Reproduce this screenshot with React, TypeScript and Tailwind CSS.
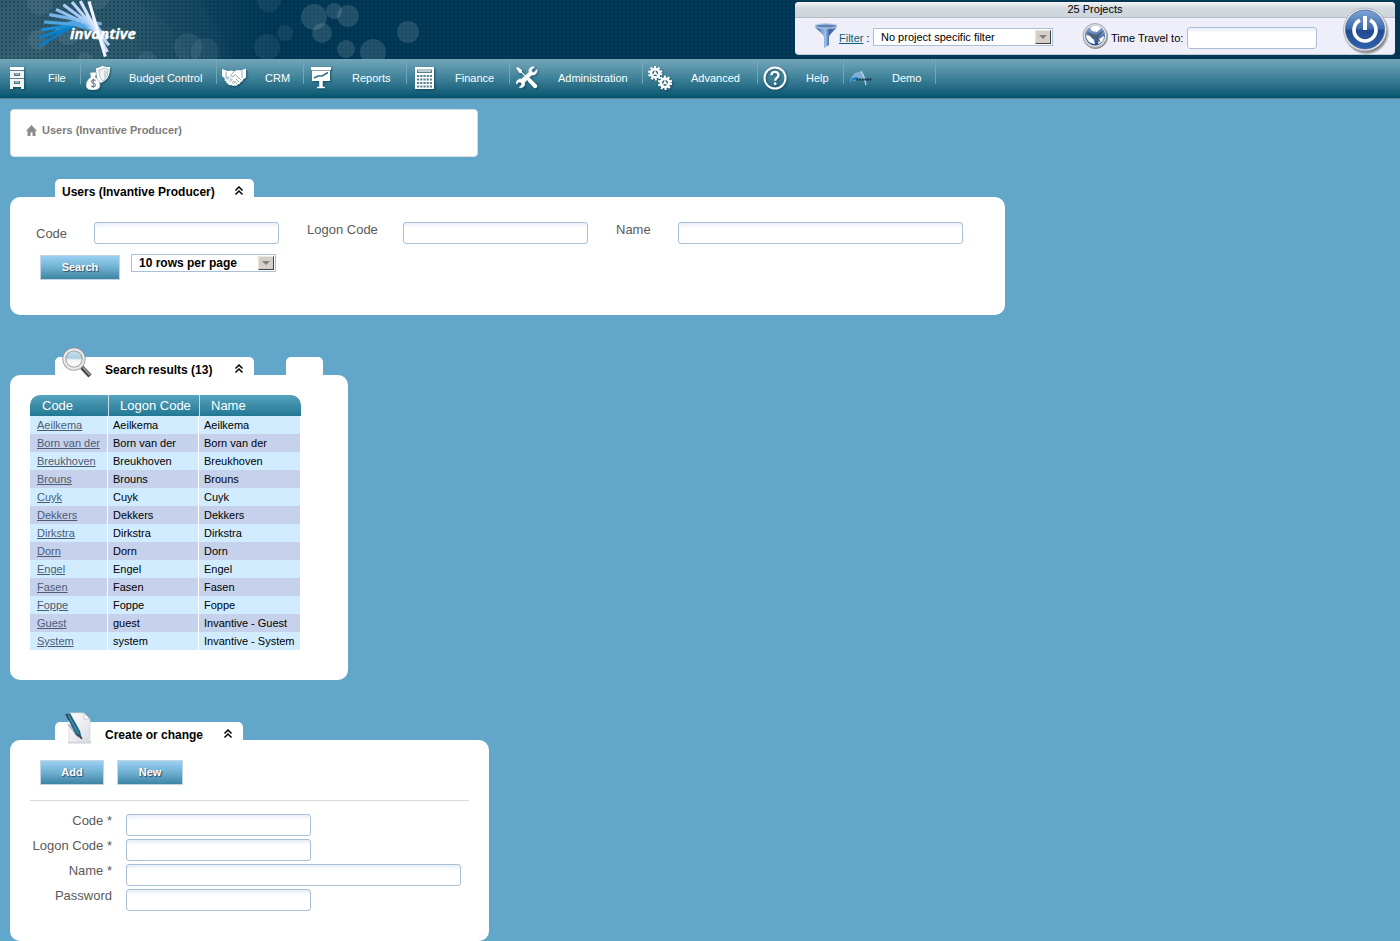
import { useState } from "react";
import type { ReactNode } from "react";

const CIRCLES: [number, number, number][] = [
  [40, 2, 13], [38, 40, 10], [98, -2, 11], [68, 33, 12], [147, 60, 9], [85, 60, 8],
  [188, 47, 14], [205, 52, 14], [269, 0, 12], [285, 33, 8], [267, 47, 13], [314, 17, 13],
  [322, 33, 10], [334, 11, 8], [348, 16, 11], [346, 49, 9], [373, 52, 13], [408, 32, 11],
];

const RAYS: [number, number, number, number, string][] = [
  [117, 138, 220, 78, "#0a7cc6"],
  [117, 113, 228, 76, "#0a80cc"],
  [124, 90, 245, 71, "#1c8cd6"],
  [132, 66, 272, 76, "#4fa6e2"],
  [148, 44, 305, 72, "#76b4ea"],
  [168, 28, 302, 92, "#93c0f0"],
  [190, 14, 326, 114, "#a8caf5"],
  [216, 6, 327, 136, "#bcd4f8"],
  [241, 3, 322, 156, "#d4e2fb"],
  [267, 4, 316, 170, "#f0f4ff"],
];

function Rays() {
  return (
    <>
      <path d="M150 100L205 66L245 48L285 62L318 108L222 78z" fill="#4fa0dc" />
      <path d="M225 62L262 45L290 70L318 110L280 92z" fill="#b4cff6" />
      {RAYS.map(([x1, y1, x2, y2, c]) => (
        <line key={`${x1}-${y1}`} x1={x1} y1={y1} x2={x2} y2={y2} stroke={c} strokeWidth="9.500" />
      ))}
    </>
  );
}

function Logo() {
  return (
    <svg width="110" height="59" viewBox="0 0 110 59" role="img" aria-label="invantive">
      <g transform="translate(-32 0) scale(0.3333)">
        <Rays />
      </g>
      <text x="38" y="39" fill="#fff" fontFamily="Open Sans, sans-serif" fontSize="15" fontWeight="700" fontStyle="italic" stroke="#fff" strokeWidth="0.300">
        invantive
      </text>
    </svg>
  );
}

function HeaderBackdrop() {
  return (
    <svg className="absolute left-0 top-0" width="430" height="59" aria-hidden="true">
      <g fill="#fff">
        <circle cx="75" cy="110" r="165" opacity="0.02" />
        <circle cx="75" cy="110" r="125" opacity="0.02" />
        <circle cx="75" cy="110" r="90" opacity="0.02" />
        {CIRCLES.map(([cx, cy, r]) => (
          <circle key={`${cx}-${cy}`} cx={cx} cy={cy} r={r} opacity={cx > 300 ? 0.13 : 0.07} />
        ))}
      </g>
    </svg>
  );
}

const iconClass = "drop-shadow-[1px_1px_1px_rgba(0,50,70,0.6)]";

function CabinetIcon() {
  return (
    <svg width="24" height="24" viewBox="0 0 24 24" className={iconClass}>
      <path d="M5 1h14v3H5z" fill="#fff" />
      <path d="M5 5h14v7H5zM5 13h14v8H5zM5 21h3v2H5zM16 21h3v2h-3z" fill="#f2f4f6" />
      <path d="M6 4.500h12M5 12.500h14" stroke="#5f7f8c" />
      <rect x="9" y="7" width="6" height="3" fill="#4d7787" />
      <rect x="9" y="15" width="6" height="3" fill="#4d7787" />
      <path d="M10 8h4M10 16h4" stroke="#dfe6ea" />
    </svg>
  );
}

function MoneyIcon() {
  return (
    <svg width="24" height="24" viewBox="0 0 24 24" className={iconClass}>
      <path d="M10 2c4 0 5-2 7-2 2 1 4 1 7 1 0 8-2 13-9 16-4-2-5-7-5-15z" fill="#fff" />
      <path d="M13 4c2 0 3-1 5-2 1 1 3 1 4 1 0 5-1 9-5 12-3-3-4-6-4-11z" fill="#f0f2f3" stroke="#9bb0b8" strokeWidth="0.800" />
      <path d="M18 4c1 1 2 1 3 1 0 4-1 6-3 8z" fill="#cdd7db" />
      <path d="M4 7c1-1 3 0 4-1l3 1-2 4c4 2 5 5 5 8 0 4-3 5-7 5s-7-1-7-5c0-3 2-6 5-8z" fill="#fafafa" stroke="#9bb0b8" strokeWidth="0.600" />
      <path d="M9.500 14.500c-1-1-4-1-4 1s4 1.500 4 3.500-3 2-4.500 1M7.300 12.500v9.500" fill="none" stroke="#6d838c" strokeWidth="1.100" />
    </svg>
  );
}

function HandshakeIcon() {
  return (
    <svg width="24" height="24" viewBox="0 0 24 24" className={iconClass}>
      <path
        d="M0 3l6 2 4-.500 2 1 3-1.500 4 .500 5-2v9l-3 2c0 1.500-1 2.500-2.500 2.500 0 1.500-1.200 2.300-2.700 2.200-.600 1.500-2 2-3.300 1.300l-1.500.500-1.500-1c-1.500.800-3 .200-3.200-1.200-1.500 0-2.300-1-2-2.300-1.500-.300-2-1.500-1.500-2.800L0 10z"
        fill="#fff"
      />
      <path
        d="M12 5.800L8.500 9.500c.500 1.500 2.500 1.200 3.500.200l1.500-1 6 5.800M4 5.500v7M20 5v7M4 12.500l2-1.700 1 .700-2 2.300M7 14.500l2-2 1 1-2 2.500M10 17l1.700-1.700.8 1-1 1.700M14 13l3.500 3.500M12.500 15l2.500 3"
        fill="none"
        stroke="#7c979f"
        strokeWidth="0.800"
      />
    </svg>
  );
}

function BoardIcon() {
  return (
    <svg width="24" height="24" viewBox="0 0 24 24" className={iconClass}>
      <path d="M2 1h20v3H2zM3 4h18v11H3z" fill="#fff" />
      <path d="M3 4.500h18" stroke="#8aa5b0" />
      <path d="M5 12l4-2 4 0 6-3.500" fill="none" stroke="#326f85" strokeWidth="1.600" />
      <path d="M11 15h2v6h-2zM8 21.500h8" fill="#fff" stroke="#fff" strokeWidth="1.500" />
    </svg>
  );
}

function CalculatorIcon() {
  return (
    <svg width="24" height="24" viewBox="0 0 24 24" className={iconClass}>
      <path d="M3 1h19v22H3z" fill="#fff" />
      <path d="M5 3.500h15v3.500H5z" fill="#55828f" />
      <path d="M6 5h13" stroke="#dfe9ec" strokeWidth="1.500" />
      <g fill="#55828f">
        {[9, 12.5, 16, 19.5].map((y) =>
          [5, 8.2, 11.4, 14.6, 17.8].map((x) => <rect key={`${x}-${y}`} x={x} y={y} width="2.200" height="2" />),
        )}
      </g>
    </svg>
  );
}

function ToolsIcon() {
  return (
    <svg width="24" height="24" viewBox="0 0 24 24" className={iconClass}>
      <path d="M1 2l2-1 4 3v2l6 6 2 0 7 7c1 2-1 4-3 3l-6.500-7v-2l-6-6H4.500z" fill="#fff" />
      <path
        d="M22 3.500l-3 3-2-.600-.500-2 3-3c-3-.800-6.500 1.500-5.500 5.400L6.600 13c-3-.700-6 1.800-5.100 5.200l2.500-2.300 2.200.600.600 2.200-2.600 2.800c3.600 1 6.300-1.800 5.500-5.100L16.700 9c3.500.800 6-2.300 5.300-5.500z"
        fill="#fff"
        stroke="#fff"
        strokeWidth="0.500"
      />
    </svg>
  );
}

function Gear({ cx, cy }: { cx: number; cy: number }) {
  return (
    <g transform={`translate(${cx} ${cy})`}>
      <circle r="6" fill="none" stroke="#fff" strokeWidth="2.400" strokeDasharray="2.100 1.670" />
      <circle r="4.200" fill="none" stroke="#fff" strokeWidth="2.600" />
      <circle r="1.500" fill="#e6eef1" />
      <path d="M0 0v-4M0 0l3.500 2.500M0 0l-3.500 2.500" stroke="#fff" strokeWidth="1.200" />
    </g>
  );
}

function GearsIcon() {
  return (
    <svg width="24" height="24" viewBox="0 0 24 24" className={iconClass}>
      <Gear cx={7.2} cy={7.2} />
      <Gear cx={17} cy={16.8} />
    </svg>
  );
}

function HelpIcon() {
  return (
    <svg width="24" height="24" viewBox="0 0 24 24" className={iconClass}>
      <circle cx="12" cy="12" r="10.500" fill="none" stroke="#fff" strokeWidth="2" />
      <path d="M8.500 9.300c.200-4.600 7.300-4.400 7 .100-.200 2.400-3.300 2.600-3.300 5.300" fill="none" stroke="#fff" strokeWidth="2.300" />
      <circle cx="12.200" cy="17.700" r="1.400" fill="#fff" />
    </svg>
  );
}

function DemoIcon() {
  return (
    <svg width="24" height="24" viewBox="0 0 24 24">
      <path d="M1 16C2 9 7 5 13 6l4 8 0 4-2-4H8z" fill="#8db9e2" opacity="0.800" />
      <path d="M1 17l2-5 5-1 2 3H5z" fill="#1583cc" />
      <path d="M12 5l3 6 2 8" stroke="#c5d9ee" strokeWidth="1.200" fill="none" />
      <path d="M7.500 13.500H23" stroke="#16343f" strokeWidth="1.800" strokeDasharray="2 0.600" />
    </svg>
  );
}

const MENU: { label: string; width: string; icon: ReactNode }[] = [
  { label: "File", width: "w-[80px]", icon: <CabinetIcon /> },
  { label: "Budget Control", width: "w-[135px]", icon: <MoneyIcon /> },
  { label: "CRM", width: "w-[86px]", icon: <HandshakeIcon /> },
  { label: "Reports", width: "w-[102px]", icon: <BoardIcon /> },
  { label: "Finance", width: "w-[102px]", icon: <CalculatorIcon /> },
  { label: "Administration", width: "w-[132px]", icon: <ToolsIcon /> },
  { label: "Advanced", width: "w-[114px]", icon: <GearsIcon /> },
  { label: "Help", width: "w-[85px]", icon: <HelpIcon /> },
  { label: "Demo", width: "w-[91px]", icon: <DemoIcon /> },
];

const USERS: [string, string, string][] = [
  ["Aeilkema", "Aeilkema", "Aeilkema"],
  ["Born van der", "Born van der", "Born van der"],
  ["Breukhoven", "Breukhoven", "Breukhoven"],
  ["Brouns", "Brouns", "Brouns"],
  ["Cuyk", "Cuyk", "Cuyk"],
  ["Dekkers", "Dekkers", "Dekkers"],
  ["Dirkstra", "Dirkstra", "Dirkstra"],
  ["Dorn", "Dorn", "Dorn"],
  ["Engel", "Engel", "Engel"],
  ["Fasen", "Fasen", "Fasen"],
  ["Foppe", "Foppe", "Foppe"],
  ["Guest", "guest", "Invantive - Guest"],
  ["System", "system", "Invantive - System"],
];

function TextInput({ id, width, type = "text" }: { id: string; width: string; type?: string }) {
  return (
    <input
      id={id}
      type={type}
      className={`h-[22px] rounded-[3px] border border-[#a9c0d6] bg-white bg-linear-to-b from-[#e6edf6] to-white to-25% px-1 text-[11px] text-black outline-none ${width}`}
    />
  );
}

function Select({ id, label, option, className }: { id: string; label: string; option: string; className: string }) {
  return (
    <span className="relative inline-flex">
      <select
        id={id}
        aria-label={label}
        className={`h-[18px] appearance-none border border-[#a9c0d6] bg-white pl-[7px] pr-5 leading-4 text-black outline-none ${className}`}
      >
        <option>{option}</option>
      </select>
      <span className="pointer-events-none absolute right-[2px] top-[2px] flex h-[14px] w-4 items-center justify-center border border-b-[#404040] border-l-[#e8e6e0] border-r-[#404040] border-t-[#e8e6e0] bg-[#d4d0c8]">
        <svg width="8" height="4" viewBox="0 0 8 4" aria-hidden="true">
          <path d="M0 0h8L4 4z" fill="#808080" />
        </svg>
      </span>
    </span>
  );
}

function ActionButton({ width, children }: { width: string; children: ReactNode }) {
  return (
    <button
      type="button"
      className={`h-[25px] border border-[#c3d6e4] bg-linear-to-b from-[#9ad0f3] via-[#6fb0d0] to-[#3d84a4] text-[11px] font-bold text-white [text-shadow:1px_1px_1px_#2d4a6a] ${width}`}
    >
      {children}
    </button>
  );
}

function Panel({
  title,
  icon,
  extraTab,
  tabClass,
  bodyClass,
  children,
}: {
  title: string;
  icon?: ReactNode;
  extraTab?: boolean;
  tabClass: string;
  bodyClass: string;
  children: ReactNode;
}) {
  const [open, setOpen] = useState(true);
  return (
    <section>
      <div className="ml-[45px] flex gap-8">
        <div className={`relative flex h-[18px] items-end justify-between rounded-t-[5px] bg-white pr-[10px] ${tabClass}`}>
          {icon}
          <h2 className="whitespace-nowrap text-[12px] font-bold leading-[10px] text-black">{title}</h2>
          <button type="button" aria-label={`Toggle ${title}`} onClick={() => setOpen(!open)} className="h-3">
            <svg width="10" height="10" viewBox="0 0 10 10" fill="none" stroke="#000" strokeWidth="1.500">
              <path d="M1.500 4.500L5 1l3.500 3.500M1.500 8.500L5 5l3.500 3.500" />
            </svg>
          </button>
        </div>
        {extraTab && <div className="h-[18px] w-[37px] rounded-t-[5px] bg-white" />}
      </div>
      <div className={`w-fit rounded-[10px] bg-white ${bodyClass}`}>{open && children}</div>
    </section>
  );
}

function MagnifierIcon() {
  return (
    <svg className="absolute -top-[10px] left-[7px]" width="31" height="32" viewBox="0 0 31 32" aria-hidden="true">
      <defs>
        <linearGradient id="lens" x1="0" y1="0" x2="0" y2="1">
          <stop offset="0" stopColor="#cfe6f2" />
          <stop offset="0.450" stopColor="#a9cfe2" />
          <stop offset="0.550" stopColor="#f1f4f5" />
          <stop offset="1" stopColor="#fff" />
        </linearGradient>
      </defs>
      <path d="M18.500 19l4 3.500" stroke="#b5b5b5" strokeWidth="3" />
      <path d="M20 20.500l8 8.500" stroke="#4a4a4a" strokeWidth="4.500" />
      <path d="M21 20.500l7 7.500" stroke="#a5a5a5" strokeWidth="1.400" />
      <circle cx="12" cy="12" r="9.700" fill="url(#lens)" stroke="#8c8c8c" strokeWidth="3.800" />
      <circle cx="12" cy="12" r="9.700" fill="none" stroke="#e9e9e9" strokeWidth="2.200" />
    </svg>
  );
}

function EditPageIcon() {
  return (
    <svg className="absolute -top-[10px] left-[9px]" width="30" height="32" viewBox="0 0 30 32" aria-hidden="true">
      <defs>
        <linearGradient id="sheet" x1="0" y1="0" x2="1" y2="1">
          <stop offset="0" stopColor="#fff" />
          <stop offset="1" stopColor="#d9dce3" />
        </linearGradient>
      </defs>
      <path d="M4 30.500h23" stroke="#cfcfd4" strokeWidth="2" />
      <path d="M5 1h15l6 6v23H5z" fill="url(#sheet)" stroke="#d5d8de" strokeWidth="0.800" />
      <path d="M20 1v6h6z" fill="#fff" stroke="#b9bcc4" strokeWidth="0.800" />
      <path d="M3 12l4 1 9 13-3-1z" fill="#a6abb3" opacity="0.800" />
      <path d="M3 2l3-1 10 18 2 8-6-4L4 7z" fill="#1f6687" />
      <path d="M4 3l12 21" stroke="#5ba2c0" strokeWidth="1" />
      <path d="M2 2l3 6M14 22l4 5" stroke="#3a3f46" strokeWidth="1.600" />
    </svg>
  );
}

function FilterIcon() {
  return (
    <svg width="24" height="26" viewBox="0 0 24 26" aria-hidden="true">
      <defs>
        <linearGradient id="funnel" x1="0" y1="0" x2="1" y2="0">
          <stop offset="0" stopColor="#2f5ea8" />
          <stop offset="0.480" stopColor="#9dbfe6" />
          <stop offset="0.650" stopColor="#3c62a4" />
          <stop offset="1" stopColor="#5d86c2" />
        </linearGradient>
      </defs>
      <path d="M1 3h22c0 3-8 8-8 11v8l-5 3V14C10 11 1 6 1 3z" fill="url(#funnel)" />
      <ellipse cx="12" cy="3" rx="11" ry="2.200" fill="#5c80b8" stroke="#b3cbe8" strokeWidth="1.200" />
    </svg>
  );
}

function GlobeIcon() {
  return (
    <svg width="28" height="28" viewBox="0 0 28 28" aria-hidden="true">
      <defs>
        <linearGradient id="globe" x1="0" y1="0" x2="0" y2="1">
          <stop offset="0" stopColor="#8fb0dc" />
          <stop offset="1" stopColor="#24488c" />
        </linearGradient>
      </defs>
      <circle cx="14.500" cy="14.500" r="12.500" fill="#8f9197" />
      <circle cx="14" cy="13.500" r="12" fill="#dcdde1" stroke="#9a9ca2" strokeWidth="0.800" />
      <circle cx="14" cy="13.500" r="10" fill="url(#globe)" />
      <path d="M9 6c3-3 8-3 11 0l-4 4-5-1zM5 13l4 1 4 4 1 4c-5 0-9-4-9-9zM18 17l5-3c0 4-2 7-6 8z" fill="#fff" />
      <path d="M6 10l9 3 8-5-6 7 3 6-6-5-2 1z" fill="#4a6076" />
    </svg>
  );
}

function PowerIcon() {
  return (
    <svg width="50" height="50" viewBox="0 0 50 50" className="block" aria-hidden="true">
      <defs>
        <linearGradient id="power" x1="0" y1="0" x2="0" y2="1">
          <stop offset="0" stopColor="#7fa6d8" />
          <stop offset="0.480" stopColor="#3f6bb0" />
          <stop offset="0.520" stopColor="#234a90" />
          <stop offset="1" stopColor="#2f62ab" />
        </linearGradient>
        <radialGradient id="powerShadow">
          <stop offset="0.800" stopColor="#333" stopOpacity="0.800" />
          <stop offset="1" stopColor="#333" stopOpacity="0" />
        </radialGradient>
      </defs>
      <circle cx="26.500" cy="27" r="23" fill="url(#powerShadow)" />
      <circle cx="25" cy="24.500" r="21.500" fill="#e9ebee" stroke="#a9adb4" strokeWidth="0.800" />
      <circle cx="25" cy="24.500" r="19.500" fill="url(#power)" stroke="#4b6595" strokeWidth="0.800" />
      <path d="M20 15.200a11 11 0 1 0 10 0" fill="none" stroke="#fff" strokeWidth="3.600" />
      <path d="M25 11v14" stroke="#fff" strokeWidth="4" />
    </svg>
  );
}

export default function App() {
  return (
    <div className="min-h-screen bg-[#62a7ca] font-['Liberation_Sans',Arial,sans-serif] text-[11px] text-black">
      <header className="relative flex h-[59px] justify-between bg-[radial-gradient(rgba(0,25,42,0.45)_0.6px,transparent_1px),linear-gradient(90deg,#2b596d_0,#1f5166_130px,#003a58_270px)] bg-size-[4px_4px,100%_100%]">
        <HeaderBackdrop />
        <a href="#home" className="relative ml-8">
          <Logo />
        </a>
        <div className="relative mr-[5px] mt-[2px] h-[53px] w-[600px] rounded-[4px] border-b border-[#c4c8cf] bg-[#eeeff8]">
          <p className="h-4 rounded-t-[4px] border-b border-[#b3bbc4] bg-linear-to-b from-[#f4f6f8] via-[#d2d9df] via-40% to-[#cdd5dc] text-center leading-[15px]">
            25 Projects
          </p>
          <div className="flex h-9 items-center pl-[19px]">
            <FilterIcon />
            <label htmlFor="filter" className="ml-px w-[34px] whitespace-pre pt-1">
              <a href="#filter" className="text-[#0b5f7c] underline">Filter</a> :
            </label>
            <span className="pt-[2px]">
              <Select id="filter" label="Filter" option="No project specific filter" className="w-[180px] text-[11px]" />
            </span>
            <span className="ml-7">
              <GlobeIcon />
            </span>
            <label htmlFor="travel" className="ml-[2px] w-[76px] whitespace-nowrap pt-1">
              Time Travel to:
            </label>
            <span className="pt-1">
              <TextInput id="travel" width="w-[130px]" />
            </span>
          </div>
          <button type="button" aria-label="Log off" className="absolute right-[5px] top-[3px]">
            <PowerIcon />
          </button>
        </div>
      </header>

      <nav className="flex h-10 border-b border-[#5f7f8c] bg-linear-to-b from-[#72a6b9] via-[#3d8198] to-[#00546f]">
        {MENU.map(({ label, width, icon }) => (
          <div key={label} className="flex">
            <a href={`#${label}`} className={`flex items-center pb-px pl-[5px] text-white ${width}`}>
              <span className="flex w-6 justify-center">{icon}</span>
              <span className="ml-[19px] whitespace-nowrap">{label}</span>
            </a>
            <span className="h-[25px] w-px bg-linear-to-b from-[#72a6b9] to-[#70a3b5]" />
          </div>
        ))}
      </nav>

      <main className="px-[10px] pt-[10px]">
        <div className="mb-[22px] flex h-12 w-full max-w-[468px] items-start gap-[5px] rounded-[4px] border border-[#d5dfe6] bg-white px-[15px] pt-[14px]">
          <svg width="11" height="11" viewBox="0 0 11 11" className="mt-px" aria-hidden="true">
            <path d="M5.500 0L11 6H9.500v5H6.500V7.500h-2V11h-3V6H0z" fill="#8b8b8b" />
          </svg>
          <h1 className="text-[11px] font-bold leading-3 text-[#7d7d7d]">Users (Invantive Producer)</h1>
        </div>

        <div className="flex flex-col gap-[42px]">
          <Panel title="Users (Invantive Producer)" tabClass="w-[199px] pl-[7px]" bodyClass="pb-[35px] pl-[26px] pr-[42px] pt-[25px]">
            <form>
              <div className="flex gap-7 text-[13px] leading-4 text-[#5a5a5a]">
                <div className="flex">
                  <label htmlFor="s-code" className="w-[58px] pt-1">Code</label>
                  <TextInput id="s-code" width="w-[185px]" />
                </div>
                <div className="flex">
                  <label htmlFor="s-logon" className="w-24">Logon Code</label>
                  <TextInput id="s-logon" width="w-[185px]" />
                </div>
                <div className="flex">
                  <label htmlFor="s-name" className="w-[62px]">Name</label>
                  <TextInput id="s-name" width="w-[285px]" />
                </div>
              </div>
              <div className="ml-1 mt-[10px] flex items-start gap-[11px]">
                <span className="pt-px">
                  <ActionButton width="w-[80px]">Search</ActionButton>
                </span>
                <Select id="rows" label="Rows per page" option="10 rows per page" className="w-[145px] text-[12px] font-bold" />
              </div>
            </form>
          </Panel>

          <Panel
            title="Search results (13)"
            icon={<MagnifierIcon />}
            extraTab
            tabClass="w-[199px] pl-[50px]"
            bodyClass="pb-[30px] pl-5 pr-[47px] pt-5"
          >
            <table className="border-separate border-spacing-0 text-left">
              <thead>
                <tr className="h-[21px] text-[13px] leading-4 text-white">
                  <th className="w-[78px] rounded-tl-[10px] bg-linear-to-b from-[#56a3bf] to-[#217893] p-0 pl-3 font-normal">Code</th>
                  <th className="w-[91px] border-l border-[#c9e0ea] bg-linear-to-b from-[#56a3bf] to-[#217893] p-0 pl-[11px] font-normal">Logon Code</th>
                  <th className="w-[102px] rounded-tr-[10px] border-l border-[#c9e0ea] bg-linear-to-b from-[#56a3bf] to-[#217893] p-0 pl-[11px] font-normal">Name</th>
                </tr>
              </thead>
              <tbody>
                {USERS.map(([code, logon, name]) => (
                  <tr key={code} className="h-[18px] leading-4 odd:bg-[#d1ecff] even:bg-[#c6d1ec]">
                    <td className="whitespace-nowrap border-r border-white p-0 pl-[7px]">
                      <a href={`#user-${code}`} className="text-[#4d5b75] underline">{code}</a>
                    </td>
                    <td className="whitespace-nowrap border-r border-white p-0 pl-[5px]">{logon}</td>
                    <td className="whitespace-nowrap border-r border-white p-0 pl-[5px]">{name}</td>
                  </tr>
                ))}
              </tbody>
            </table>
          </Panel>

          <Panel title="Create or change" icon={<EditPageIcon />} tabClass="w-[188px] pl-[50px]" bodyClass="px-5 pb-[30px] pt-5">
            <form>
              <div className="ml-[10px] flex gap-[13px]">
                <ActionButton width="w-[64px]">Add</ActionButton>
                <ActionButton width="w-[66px]">New</ActionButton>
              </div>
              <hr className="mb-[13px] mt-[15px] border-[#dadada]" />
              <div className="grid grid-cols-[auto_auto] justify-start gap-x-[14px] gap-y-[3px] pl-[6px] pr-2 text-[13px] leading-[14px] text-[#5a5a5a]">
                <label htmlFor="c-code" className="w-[76px] whitespace-nowrap text-right">Code *</label>
                <TextInput id="c-code" width="w-[185px]" />
                <label htmlFor="c-logon" className="flex w-[76px] justify-end whitespace-nowrap">Logon Code *</label>
                <TextInput id="c-logon" width="w-[185px]" />
                <label htmlFor="c-name" className="w-[76px] whitespace-nowrap text-right">Name *</label>
                <TextInput id="c-name" width="w-[335px]" />
                <label htmlFor="c-password" className="w-[76px] whitespace-nowrap text-right">Password</label>
                <TextInput id="c-password" type="password" width="w-[185px]" />
              </div>
            </form>
          </Panel>
        </div>
      </main>
    </div>
  );
}
